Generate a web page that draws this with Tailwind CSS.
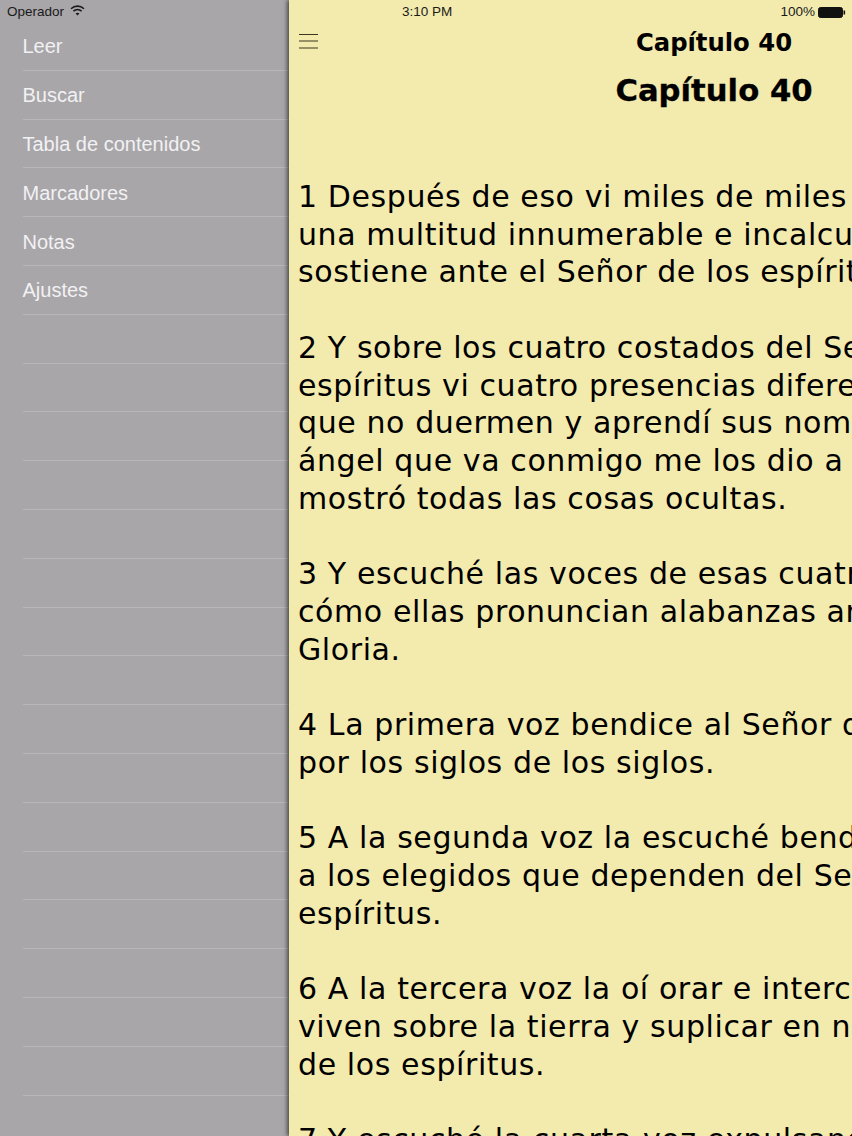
<!DOCTYPE html>
<html lang="es">
<head>
<meta charset="utf-8">
<script src="https://cdn.jsdelivr.net/npm/@tailwindcss/browser@4"></script>
<title>Capítulo 40</title>
</head>
<body class="w-[852px] h-[1136px] overflow-hidden">
<div class="relative flex w-[852px] h-[1136px] overflow-hidden bg-[#a8a6a9] font-['Liberation_Sans',sans-serif]">
  <aside class="w-[289px] shrink-0 flex flex-col">
    <div class="h-[24px] flex items-center pl-[7px] gap-[6px] text-[13.5px] text-[#1a1a1a] shrink-0">
      <span>Operador</span>
      <svg class="-mt-[3px]" width="15" height="11" viewBox="0 0 15 11" fill="none" stroke="#1a1a1a" stroke-width="1.6"><path d="M1 3.8C4.7 .2 10.3 .2 14 3.8"/><path d="M3.4 6.2c2.4-2.2 5.8-2.2 8.2 0"/><path d="M7.5 10.5 5.6 8.4c1.1-1 2.7-1 3.8 0z" fill="#1a1a1a" stroke="none"/></svg>
    </div>
    <nav class="flex flex-col text-[20px] text-[#f2f1f3] -mt-[2px]">
      <div class="h-[48.8px] flex items-center pl-[22.5px]"><span>Leer</span></div>
      <div class="h-[48.8px] flex items-center pl-[22.5px]"><span>Buscar</span></div>
      <div class="h-[48.8px] flex items-center pl-[22.5px]"><span>Tabla de contenidos</span></div>
      <div class="h-[48.8px] flex items-center pl-[22.5px]"><span>Marcadores</span></div>
      <div class="h-[48.8px] flex items-center pl-[22.5px]"><span>Notas</span></div>
      <div class="h-[48.8px] flex items-center pl-[22.5px]"><span>Ajustes</span></div>
    </nav>
    <div class="absolute left-[23px] top-0 w-[266px] h-full pointer-events-none flex flex-col pt-[22px]">
      <div class="h-[48.8px] shrink-0 border-b border-[#b8b6ba]"></div><div class="h-[48.8px] shrink-0 border-b border-[#b8b6ba]"></div><div class="h-[48.8px] shrink-0 border-b border-[#b8b6ba]"></div><div class="h-[48.8px] shrink-0 border-b border-[#b8b6ba]"></div><div class="h-[48.8px] shrink-0 border-b border-[#b8b6ba]"></div><div class="h-[48.8px] shrink-0 border-b border-[#b8b6ba]"></div><div class="h-[48.8px] shrink-0 border-b border-[#b8b6ba]"></div><div class="h-[48.8px] shrink-0 border-b border-[#b8b6ba]"></div><div class="h-[48.8px] shrink-0 border-b border-[#b8b6ba]"></div><div class="h-[48.8px] shrink-0 border-b border-[#b8b6ba]"></div><div class="h-[48.8px] shrink-0 border-b border-[#b8b6ba]"></div><div class="h-[48.8px] shrink-0 border-b border-[#b8b6ba]"></div><div class="h-[48.8px] shrink-0 border-b border-[#b8b6ba]"></div><div class="h-[48.8px] shrink-0 border-b border-[#b8b6ba]"></div><div class="h-[48.8px] shrink-0 border-b border-[#b8b6ba]"></div><div class="h-[48.8px] shrink-0 border-b border-[#b8b6ba]"></div><div class="h-[48.8px] shrink-0 border-b border-[#b8b6ba]"></div><div class="h-[48.8px] shrink-0 border-b border-[#b8b6ba]"></div><div class="h-[48.8px] shrink-0 border-b border-[#b8b6ba]"></div><div class="h-[48.8px] shrink-0 border-b border-[#b8b6ba]"></div><div class="h-[48.8px] shrink-0 border-b border-[#b8b6ba]"></div><div class="h-[48.8px] shrink-0 border-b border-[#b8b6ba]"></div>
    </div>
  </aside>
  <main class="relative flex-1 min-w-0 bg-[#f3eaae] shadow-[-2px_0_4px_rgba(0,0,0,0.55)] flex flex-col overflow-hidden">
    <div class="h-[24px] shrink-0 flex items-center justify-between text-[13.5px] text-[#1a1a1a] pr-[6px]">
      <span class="ml-[113px] font-medium">3:10 PM</span>
      <div class="flex items-center gap-[3px]">
        <span>100%</span>
        <svg width="28" height="11" viewBox="0 0 28 11"><rect x="0.5" y="0.5" width="24" height="10" rx="2" fill="#111" stroke="#111"/><rect x="25.5" y="3.5" width="1.6" height="4" fill="#111"/></svg>
      </div>
    </div>
    <div class="absolute left-[10px] top-[33px]">
      <svg width="19" height="16" viewBox="0 0 19 16" stroke="#3a3620" stroke-width="1"><path d="M0 1.5h19M0 8h19M0 15h19"/></svg>
    </div>
    <div class="font-['DejaVu_Sans',sans-serif] text-black">
      <div class="h-[38px] flex items-center justify-center pl-[287px]">
        <h2 class="text-[24.3px] font-bold whitespace-nowrap">Capítulo 40</h2>
      </div>
      <h1 class="h-[58px] flex items-center justify-center pl-[287px] text-[30.7px] font-bold whitespace-nowrap [-webkit-text-stroke:0.3px_black]">Capítulo 40</h1>
      <div class="mt-[58px] pl-[9px] text-[30px] tracking-[0.6px] leading-[37.72px] whitespace-nowrap">
        <p class="mb-[37.72px]">1 Después de eso vi miles de miles<br>una multitud innumerable e incalculable<br>sostiene ante el Señor de los espíritus.</p>
        <p class="mb-[37.72px]">2 Y sobre los cuatro costados del Señor<br>espíritus vi cuatro presencias diferentes<br>que no duermen y aprendí sus nombres<br>ángel que va conmigo me los dio a<br>mostró todas las cosas ocultas.</p>
        <p class="mb-[37.72px]">3 Y escuché las voces de esas cuatro<br>cómo ellas pronuncian alabanzas ante<br>Gloria.</p>
        <p class="mb-[37.72px]">4 La primera voz bendice al Señor de<br>por los siglos de los siglos.</p>
        <p class="mb-[37.72px]">5 A la segunda voz la escuché bendecir<br>a los elegidos que dependen del Señor<br>espíritus.</p>
        <p class="mb-[37.72px]">6 A la tercera voz la oí orar e interceder<br>viven sobre la tierra y suplicar en nombre<br>de los espíritus.</p>
        <p>7 Y escuché la cuarta voz expulsando</p>
      </div>
    </div>
  </main>
</div>
</body>
</html>
